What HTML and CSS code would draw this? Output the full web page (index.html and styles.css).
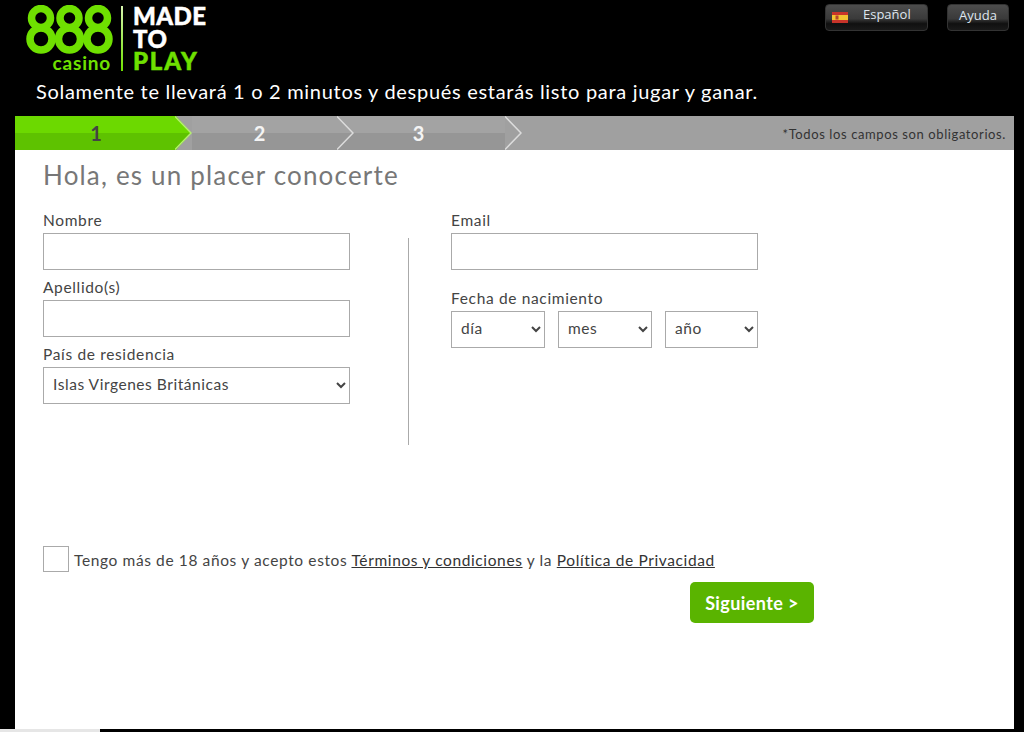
FILE: index.html
```html
<!DOCTYPE html>
<html lang="es">
<head>
<meta charset="utf-8">
<title>888 casino</title>
<link rel="stylesheet" href="styles.css">
</head>
<body>
<div class="page">
  <header class="header">
    <div class="brand">
      <div class="logo888">
        <svg class="rings" width="88" height="49" viewBox="0 0 88 49">
          <g fill="none" stroke="#6fe000" stroke-width="7.500">
            <circle cx="15" cy="13" r="9.5"/><circle cx="15" cy="34" r="11"/>
            <circle cx="43.500" cy="13" r="9.5"/><circle cx="43.500" cy="34" r="11"/>
            <circle cx="72" cy="13" r="9.5"/><circle cx="72" cy="34" r="11"/>
          </g>
        </svg>
        <span class="casino">casino</span>
      </div>
      <span class="logo-rule"></span>
      <div class="slogan"><span>MADE</span><span>TO</span><span class="play">PLAY</span></div>
    </div>
    <div class="top-actions">
      <button class="top-btn lang" type="button">
        <svg width="16" height="11" viewBox="0 0 16 11">
          <rect width="16" height="11" fill="#c8342a"/>
          <rect y="3" width="16" height="5" fill="#f2c230"/>
          <rect x="3.500" y="3.500" width="3" height="4" fill="#b5452c"/>
        </svg>
        <span>Español</span>
      </button>
      <button class="top-btn help" type="button">Ayuda</button>
    </div>
  </header>
  <p class="tagline">Solamente te llevará 1 o 2 minutos y después estarás listo para jugar y ganar.</p>

  <nav class="steps">
    <div class="step step-one">
      <span class="step-num">1</span>
      <svg class="chev" width="17" height="34" viewBox="0 0 17 34"><polygon points="0,0 1,0 16,17 0,17" fill="#6cd900"/><polygon points="0,17 16,17 1,34 0,34" fill="#5ec200"/><polyline points="0,0.500 16,17 0,33.500" fill="none" stroke="#b4ee70" stroke-width="1.500"/></svg>
    </div>
    <div class="step step-two">
      <span class="step-num">2</span>
      <svg class="chev" width="17" height="34" viewBox="0 0 17 34"><polyline points="0,0.500 16,17 0,33.500" fill="none" stroke="#dcdcdc" stroke-width="1.500"/></svg>
    </div>
    <div class="step step-three">
      <span class="step-num">3</span>
      <svg class="chev" width="17" height="34" viewBox="0 0 17 34"><polyline points="0,0.500 16,17 0,33.500" fill="none" stroke="#dcdcdc" stroke-width="1.500"/></svg>
    </div>
    <span class="required">*Todos los campos son obligatorios.</span>
  </nav>

  <main class="panel">
    <h1 class="title">Hola, es un placer conocerte</h1>
    <form class="form">
      <div class="columns">
        <div class="col">
          <div class="field"><label class="label">Nombre</label><input class="control" type="text"></div>
          <div class="field"><label class="label">Apellido(s)</label><input class="control" type="text"></div>
          <div class="field"><label class="label">País de residencia</label>
            <select class="control select"><option>Islas Virgenes Británicas</option></select>
          </div>
        </div>
        <div class="divider"></div>
        <div class="col">
          <div class="field"><label class="label">Email</label><input class="control" type="text"></div>
          <div class="field field-dob"><label class="label">Fecha de nacimiento</label>
            <div class="dob">
              <select class="control select"><option>día</option></select>
              <select class="control select"><option>mes</option></select>
              <select class="control select"><option>año</option></select>
            </div>
          </div>
        </div>
      </div>
      <div class="agree">
        <span class="checkbox"></span>
        <p class="agree-text">Tengo más de 18 años y acepto estos <a href="#">Términos y condiciones</a> y la <a href="#">Política de Privacidad</a></p>
      </div>
      <div class="actions"><button class="next" type="button">Siguiente &gt;</button></div>
    </form>
  </main>
  <div class="hscroll"><span class="hthumb"></span></div>
</div>
</body>
</html>
```
FILE: styles.css
```css
* { box-sizing: border-box; }
html, body { margin: 0; height: 100%; }
body { background: #000; font-family: "Lato", "Liberation Sans", sans-serif; overflow: hidden; color: #444; }
.page { height: 732px; display: flex; flex-direction: column; }

.header { display: flex; justify-content: space-between; height: 79px; padding: 4px 15px 0 26px; }
.brand { display: flex; align-items: flex-start; }
.logo888 { width: 88px; display: flex; flex-direction: column; align-items: flex-end; }
.rings { display: block; margin-top: 1px; }
.casino { font: 700 19px/17px "Lato", sans-serif; color: #6fe000; margin-top: 0; margin-right: 3px; letter-spacing: 0.8px; }
.logo-rule { width: 2px; height: 65px; margin: 2px 0 0 7px; background: linear-gradient(#d8f5b0, #6fe000); }
.slogan { display: flex; flex-direction: column; margin: 1px 0 0 10px; font: 900 24px/22.500px "Lato", sans-serif; color: #fff; letter-spacing: 0.4px; -webkit-text-stroke: 0.5px currentColor; }
.play { color: #6fe000; letter-spacing: 1.8px; }

.top-actions { display: flex; gap: 19px; }
.top-btn { height: 27px; border: 1px solid #333; border-radius: 4px; background: linear-gradient(#4c4c4c, #3a3a3a 55%, #101010 75%, #1a1a1a); color: #dfe6ee; font: 13px "Open Sans", sans-serif; padding: 0; }
.lang { width: 103px; display: flex; align-items: center; gap: 15px; padding: 0 0 0 6px; }
.lang span { padding-bottom: 8px; }
.help { width: 62px; padding-bottom: 6px; }

.tagline { margin: 0; height: 37px; padding: 0 0 0 36px; font-size: 20px; line-height: 24px; color: #fff; letter-spacing: 0.7px; }

.steps { display: flex; align-items: stretch; height: 34px; margin: 0 10px 0 15px; background: #a0a0a0; }
.step { display: flex; align-items: stretch; background: linear-gradient(#a3a3a3 50%, #969696 50%); }
.step-one { width: 177px; background: none; }
.step-one .step-num { background: linear-gradient(#6cd900 50%, #5ec200 50%); color: #444; padding-left: 2px; }
.step-two { width: 162px; }
.step-three { width: 168px; }
.step-num { flex: 1; display: flex; align-items: center; justify-content: center; font: 700 20px "Lato", sans-serif; color: #f4f4f4; }
.step-two .step-num { padding-right: 10px; }
.step-three .step-num { padding-right: 22px; }
.chev { display: block; flex: none; }
.step-three .chev { background: #a0a0a0; }
.required { margin-left: auto; align-self: center; padding: 1px 8px 0 0; font-size: 13px; color: #333; letter-spacing: 0.6px; }

.panel { flex: 1; margin: 0 10px 0 15px; background: #fff; padding: 10px 0 0 28px; }
.title { margin: 0 0 23px; font-size: 26px; line-height: 30px; font-weight: 400; color: #777; letter-spacing: 1.18px; }
.form { width: 771px; }
.columns { display: grid; grid-template-columns: 307px 101px 307px; }
.col { display: flex; flex-direction: column; gap: 10px; }
.field { display: flex; flex-direction: column; }
.field-dob { margin-top: 11px; }
.label { height: 20px; font-size: 15.500px; line-height: 14px; letter-spacing: 0.65px; color: #444; }
.control { height: 37px; width: 100%; border: 1px solid #aaa; border-radius: 0; background: #fff; font: 15.500px "Lato", sans-serif; letter-spacing: 0.55px; color: #444; padding: 0 5px; }
.select { padding-bottom: 3px; }
.dob { display: grid; grid-template-columns: 94px 94px 93px; gap: 13px; }
.divider { width: 1px; height: 207px; margin: 25px 0 0 58px; background: #aaa; }

.agree { display: flex; align-items: center; gap: 5px; margin-top: 101px; }
.checkbox { width: 26px; height: 26px; border: 1px solid #aaa; flex: none; }
.agree-text { margin: 0; padding-top: 1px; font-size: 15.500px; letter-spacing: 0.62px; color: #444; }
.agree-text a { color: #333; }
.actions { display: flex; justify-content: flex-end; margin-top: 10px; }
.next { width: 124px; height: 41px; border: 0; border-radius: 5px; background: #5ab400; color: #fff; font: 700 18px "Lato", sans-serif; letter-spacing: 0.4px; }

.hscroll { height: 3px; background: #000; }
.hthumb { display: block; width: 100px; height: 3px; background: #e6e6e6; }
```
